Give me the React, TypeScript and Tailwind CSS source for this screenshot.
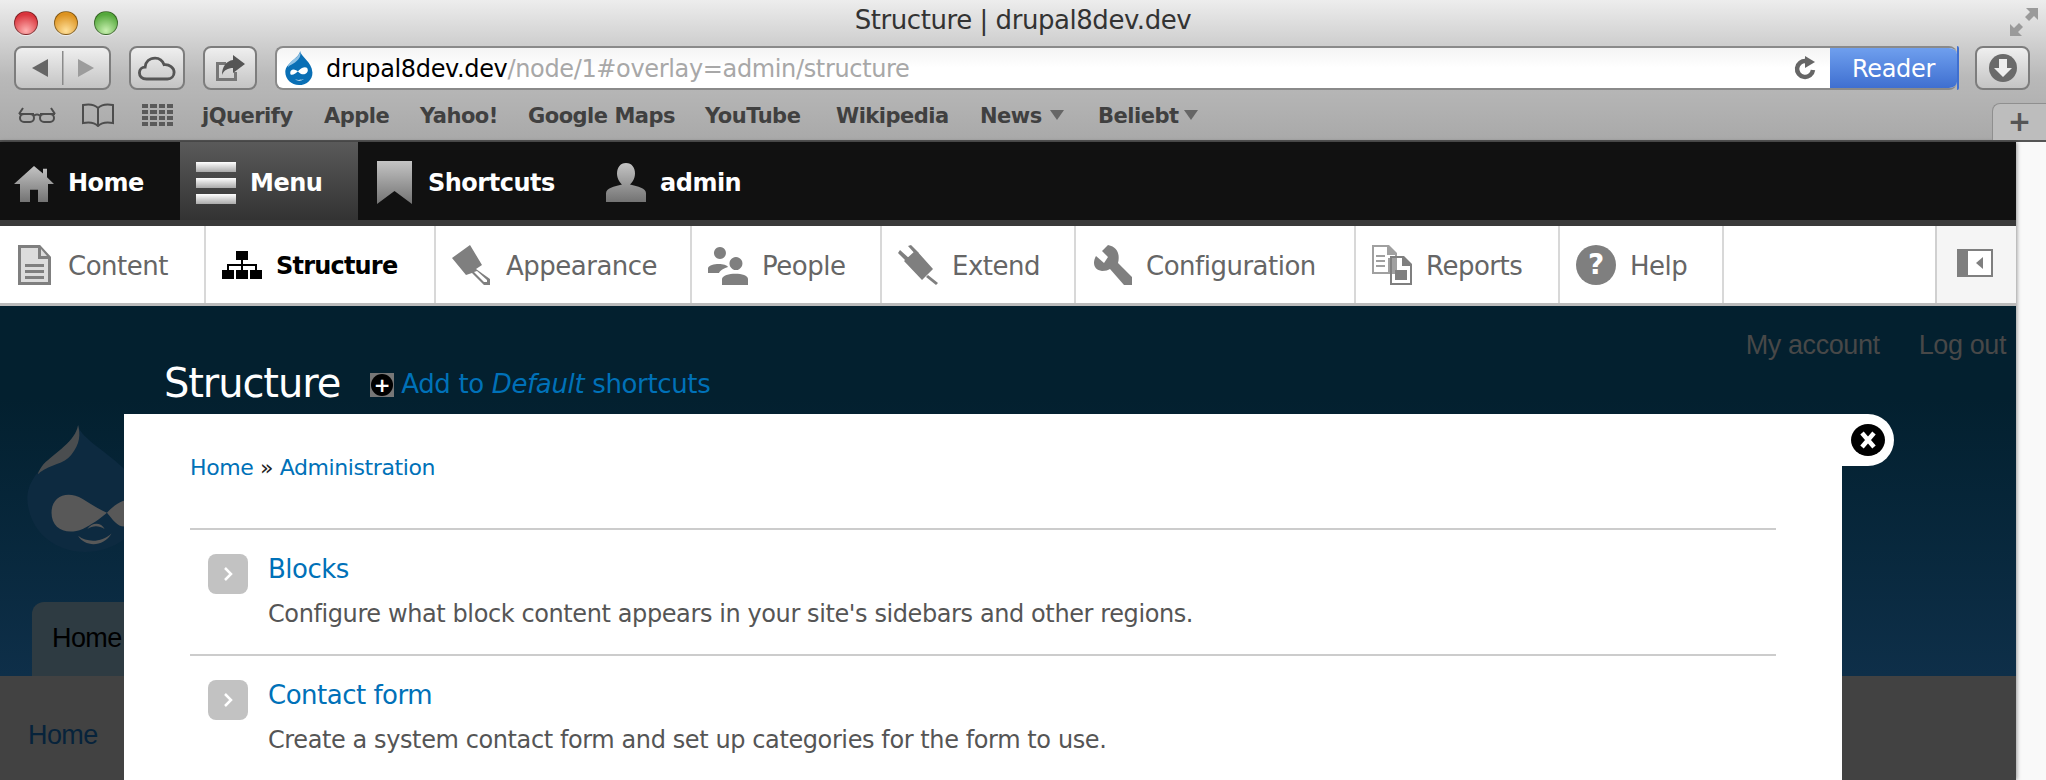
import type { ReactNode } from "react";

const lucida = "font-['DejaVu_Sans',sans-serif]";
const helvetica = "font-['Liberation_Sans',sans-serif]";

function Favicon() {
  return (
    <svg viewBox="0 0 100 124" className="w-[28px] h-[34px] shrink-0">
      <path d="M54 0C55 20 97 38 99 78C100 106 76 124 50 124C22 124 0 104 0 76C2 42 50 28 54 0Z" fill="#0a6fb5" />
      <path d="M54 2C54 14 40 24 26 34C18 40 10 50 9 60C18 48 40 46 52 24C56 16 56 8 54 2Z" fill="#8fc1e4" />
      <path d="M18 80C18 66 34 62 50 78C64 92 84 82 82 68C80 54 62 58 50 70C38 84 18 94 18 80Z" fill="#fff" />
      <path d="M36 104C44 110 60 110 68 102C60 106 44 106 36 104Z" fill="#fff" />
    </svg>
  );
}

function BackdropDrop() {
  return (
    <svg viewBox="0 0 100 110" className="w-[116px] h-[127px]">
      <path d="M44 0C46 16 96 34 100 66C100 92 78 110 50 110C22 110 0 90 0 62C2 34 40 22 44 0Z" fill="#0d2a40" />
      <path d="M44 0C42 14 24 24 14 34C8 42 9 44 11 41C20 34 32 34 38 26C46 16 46 8 44 0Z" fill="#4a4d4f" />
      <path d="M21 76C21 62 34 56 48 64C58 70 64 74 69 76C62 82 56 86 48 90C34 96 21 90 21 76Z" fill="#585858" />
      <path d="M69 76C78 66 88 62 96 66C98 78 94 88 84 88C78 88 74 82 69 76Z" fill="#585858" />
      <path d="M44 96C52 102 64 102 73 94C66 106 50 106 44 96Z" fill="#585858" />
      <path d="M52 90C56 84 64 84 67 90C62 87 57 87 52 90Z" fill="#585858" />
    </svg>
  );
}

function Light({ from, to }: { from: string; to: string }) {
  return (
    <div
      className="w-6 h-6 rounded-full border border-black/40 shadow-[0_1px_0_rgba(255,255,255,0.6)]"
      style={{ background: `radial-gradient(circle at 50% 85%, ${to} 0%, ${from} 75%)` }}
    />
  );
}

function TitleBar() {
  return (
    <div className="relative h-[46px] flex items-center pl-[14px] gap-4">
      <Light from="#d9343c" to="#ffb0b0" />
      <Light from="#dd9320" to="#ffe09a" />
      <Light from="#55a83c" to="#c8f0b0" />
      <div className={`absolute left-0 right-0 top-[5px] text-center text-[26px] leading-[30px] text-[#333] ${lucida} tracking-[-0.45px]`}>
        Structure | drupal8dev.dev
      </div>
      <svg viewBox="0 0 28 28" className="absolute right-[8px] top-[8px] w-[28px] h-[28px]" fill="#9a9a9a">
        <path d="M16 0H28V12L24 8L19 13L15 9L20 4ZM0 28V16L4 20L9 15L13 19L8 24L12 28Z" />
      </svg>
    </div>
  );
}

function ToolButton({ className, children }: { className: string; children: ReactNode }) {
  return (
    <div className={`h-[44px] rounded-[8px] border-2 border-[#7d7d7d] bg-gradient-to-b from-[#efefef] to-[#c4c4c4] flex items-center justify-center ${className}`}>
      {children}
    </div>
  );
}

function Toolbar() {
  return (
    <div className="h-[44px] flex items-center pl-[14px]">
      <ToolButton className="w-[97px]">
        <svg viewBox="0 0 93 40" className="w-[93px] h-[40px]">
          <path d="M32 11V29L16 20Z" fill="#666" />
          <rect x="46" y="3" width="1.5" height="34" fill="#8a8a8a" />
          <path d="M62 11V29L78 20Z" fill="#9c9c9c" />
        </svg>
      </ToolButton>
      <ToolButton className="w-[56px] ml-[18px]">
        <svg viewBox="0 0 40 26" className="w-[38px] h-[25px]" fill="none" stroke="#555" strokeWidth="3">
          <path d="M9 24C4 24 1.500 21 1.500 17.500C1.500 14 4 11.500 7.500 11.500C8 6 12 2 18 2C23 2 26 5 27.500 9C33 8.500 38 12 38 17C38 21 35 24 31 24Z" />
        </svg>
      </ToolButton>
      <ToolButton className="w-[54px] ml-[18px]">
        <svg viewBox="0 0 32 28" className="w-[32px] h-[28px]">
          <path d="M2 8H12V11H5V24H20V18H23V27H2Z" fill="#777" />
          <path d="M19 1L31 10L19 19V14C14 14 10 16 8 21C8 13 12 7 19 6Z" fill="#555" />
        </svg>
      </ToolButton>
      <div className="ml-[18px] w-[1682px] h-[44px] flex rounded-[8px] border-y-2 border-l-2 border-[#8a8a8a] bg-gradient-to-b from-[#f4f4f4] via-white to-white overflow-hidden">
        <div className="flex-1 flex items-center pl-2">
          <Favicon />
          <div className={`ml-[13px] mt-[2px] text-[24px] leading-[30px] tracking-[-0.35px] text-black ${lucida}`}>
            drupal8dev.dev<span className="text-[#a8a8a8]">/node/1#overlay=admin/structure</span>
          </div>
          <svg viewBox="0 0 24 24" className="ml-auto mr-[12px] w-[24px] h-[24px]" fill="none">
            <path d="M19 14A8 8 0 1 1 12 5" stroke="#666" strokeWidth="4.500" />
            <path d="M11 0L21 6L11 12Z" fill="#666" />
          </svg>
        </div>
        <div className={`w-[127px] pt-[2px] flex items-center justify-center text-[24px] text-white tracking-[-0.3px] bg-gradient-to-b from-[#6f9fee] to-[#3f6fd0] ${lucida}`}>
          Reader
        </div>
      </div>
      <div className="w-[2px] h-[44px] bg-[#3f6fd0] rounded-r-[6px]" />
      <ToolButton className="w-[55px] ml-[16px]">
        <svg viewBox="0 0 30 30" className="w-[30px] h-[30px]">
          <circle cx="15" cy="15" r="14" fill="#6a6a6a" />
          <path d="M11 6H19V15H24L15 24L6 15H11Z" fill="#ededed" />
        </svg>
      </ToolButton>
    </div>
  );
}

function Bookmark({ label, className }: { label: string; className: string }) {
  return <span className={`mt-[3px] text-[21px] font-bold text-[#404040] tracking-[-0.5px] ${className}`}>{label}</span>;
}

function Bookmarks() {
  return (
    <div className={`relative h-[50px] flex items-center pl-[18px] ${lucida}`}>
      <svg viewBox="0 0 38 16" className="w-[38px] h-[16px]" fill="none" stroke="#4d4d4d" strokeWidth="2">
        <path d="M1 7L5 1M37 7L33 1M1 7H16M22 7H37M16 9C17 7 21 7 22 9" />
        <rect x="2" y="7" width="14" height="8" rx="4" />
        <rect x="22" y="7" width="14" height="8" rx="4" />
      </svg>
      <svg viewBox="0 0 34 24" className="ml-[25px] w-[34px] h-[24px]" fill="none" stroke="#4d4d4d" strokeWidth="2">
        <path d="M17 5C13 1 7 1 2 2V20C7 19 13 19 17 23C21 19 27 19 32 20V2C27 1 21 1 17 5ZM17 5V23" />
      </svg>
      <div className="ml-[27px] w-[31px] grid grid-cols-4 gap-[2px]">
        {Array.from({ length: 16 }).map((_, i) => (
          <div key={i} className="h-[4px] bg-[#5a5a5a]" />
        ))}
      </div>
      <Bookmark label="jQuerify" className="ml-[29px] w-[122px]" />
      <Bookmark label="Apple" className="w-[96px]" />
      <Bookmark label="Yahoo!" className="w-[108px]" />
      <Bookmark label="Google Maps" className="w-[177px]" />
      <Bookmark label="YouTube" className="w-[131px]" />
      <Bookmark label="Wikipedia" className="w-[144px]" />
      <Bookmark label="News" className="w-[70px]" />
      <span className="w-0 h-0 border-x-[7px] border-x-transparent border-t-[10px] border-t-[#666] mr-[34px]" />
      <Bookmark label="Beliebt" className="w-[86px]" />
      <span className="w-0 h-0 border-x-[7px] border-x-transparent border-t-[10px] border-t-[#666]" />
      <div className="absolute right-0 bottom-0 w-[54px] h-[37px] rounded-tl-[8px] border-l border-t border-[#8f8f8f] bg-[#bdbdbd] flex items-center justify-center text-[#555] text-[28px] font-bold leading-none">
        +
      </div>
    </div>
  );
}

function GreyIcon({ id, children, className }: { id: string; children: ReactNode; className: string }) {
  return (
    <svg viewBox="0 0 40 40" className={className} preserveAspectRatio="none">
      <defs>
        <linearGradient id={id} x1="0" y1="0" x2="0" y2="1">
          <stop offset="0" stopColor="#c4c4c4" />
          <stop offset="1" stopColor="#737373" />
        </linearGradient>
      </defs>
      <g fill={`url(#${id})`}>{children}</g>
    </svg>
  );
}

function BlackBar() {
  return (
    <div className={`h-[84px] bg-[#111] border-b-[6px] border-[#3a3a3a] flex text-[24px] font-bold text-white ${lucida} tracking-[-0.5px]`}>
      <div className="w-[180px] pt-[3px] flex items-center pl-[14px] gap-[14px]">
        <GreyIcon id="g-home" className="w-[40px] h-[38px]">
          <path d="M20 2L29 10V5H33V14L40 21H34V40H24V27H16V40H6V21H0Z" />
        </GreyIcon>
        Home
      </div>
      <div className="w-[178px] pt-[3px] flex items-center pl-[16px] gap-[14px] bg-gradient-to-b from-[#5a5a5a] to-[#333]">
        <div className="w-[40px] flex flex-col gap-[6px]">
          <div className="h-[10px] bg-gradient-to-b from-white to-[#aaa]" />
          <div className="h-[10px] bg-gradient-to-b from-white to-[#aaa]" />
          <div className="h-[10px] bg-gradient-to-b from-white to-[#aaa]" />
        </div>
        Menu
      </div>
      <div className="w-[220px] pt-[3px] flex items-center pl-[19px] gap-[16px]">
        <GreyIcon id="g-mark" className="w-[35px] h-[43px]">
          <path d="M0 0H40V40L20 28L0 40Z" />
        </GreyIcon>
        Shortcuts
      </div>
      <div className="pt-[3px] flex items-center pl-[28px] gap-[14px]">
        <GreyIcon id="g-user" className="w-[40px] h-[39px]">
          <path d="M20 0C26 0 29 5 29 11C29 17 25 21 24 22C32 24 40 26 40 31V40H0V31C0 26 8 24 16 22C15 21 11 17 11 11C11 5 14 0 20 0Z" />
        </GreyIcon>
        admin
      </div>
    </div>
  );
}

const g = "#7f7f7f";

const icons: Record<string, ReactNode> = {
  Content: (
    <>
      <path d="M0 0H22L33 12V40H0Z" fill="#dcdcdc" />
      <path d="M0 0H22L33 12V40H0ZM3 3V37H30V14H20V3ZM23 4V11H29Z" fillRule="evenodd" fill={g} />
      <path d="M7 19H26V22H7ZM7 25H26V28H7ZM7 31H26V34H7Z" fill={g} />
    </>
  ),
  Structure: (
    <path d="M14 6H26V15H21V19H35V25H40V34H28V25H33V21H21V25H26V34H14V25H19V21H7V25H12V34H0V25H5V19H19V15H14Z" fill="#000" />
  ),
  Appearance: (
    <path d="M0 13L18 0L30 20L24 24L38 34V40H32L20 28L14 30ZM22 27L32 37H35V35L25 26Z" fillRule="evenodd" fill={g} />
  ),
  People: (
    <path d="M12 2A6 6 0 1 1 11.900 2ZM28 12A6.500 6.500 0 1 1 27.900 12ZM0 23C2 18 18 18 20 22C14 24 12 26 11 28H0ZM14 34C15 27 40 27 40 34V40H14Z" fill={g} />
  ),
  Extend: (
    <path d="M6 16L18 5L35 24L24 35ZM0 8L2 5L12 14L9 17ZM10 1L13 0L21 8L18 10ZM30 30L40 38L38 40L28 32Z" fill={g} />
  ),
  Configuration: <path d="M16 0L10 6L16 12L12 18L4 11C0 18 2 25 10 26C14 26 16 25 18 24L32 40H40V32L26 18C28 10 26 2 16 0Z" fill={g} />,
  Reports: (
    <>
      <path d="M0 0H17L25 8V29H0ZM2 2V27H16V13H23V10H15V2Z" fillRule="evenodd" fill="#a0a0a0" />
      <path d="M4 10H13V12H4ZM4 15H13V17H4ZM4 20H13V22H4Z" fill="#a0a0a0" />
      <path d="M18 11H32L40 19V40H18ZM20 13V38H38V21H30V13Z" fillRule="evenodd" fill={g} />
      <path d="M23 25H35V35H23Z" fill={g} />
    </>
  ),
};

function NavItem({ label, active, className }: { label: string; active?: boolean; className: string }) {
  return (
    <div className={`h-full flex items-center border-r-2 border-[#d8d8d8] ${className}`}>
      {label === "Help" ? (
        <div className="w-[40px] h-[40px] rounded-full bg-[#7f7f7f] flex items-center justify-center text-white text-[28px] font-bold leading-none">
          ?
        </div>
      ) : (
        <svg viewBox="0 0 40 40" className="w-[40px] h-[40px] shrink-0">
          {icons[label]}
        </svg>
      )}
      <span className={active ? "mt-[3px] text-[24px] font-bold text-black tracking-[-0.8px]" : "mt-[3px] text-[#666] tracking-[-0.5px]"}>{label}</span>
    </div>
  );
}

function NavBar() {
  return (
    <div className={`h-[80px] bg-white border-b-[3px] border-[#bbb] flex text-[26px] ${lucida}`}>
      <NavItem label="Content" className="w-[206px] pl-[18px] gap-[10px]" />
      <NavItem label="Structure" active className="w-[230px] pl-[16px] gap-[14px]" />
      <NavItem label="Appearance" className="w-[256px] pl-[16px] gap-[14px]" />
      <NavItem label="People" className="w-[190px] pl-[16px] gap-[14px]" />
      <NavItem label="Extend" className="w-[194px] pl-[16px] gap-[14px]" />
      <NavItem label="Configuration" className="w-[280px] pl-[16px] gap-[14px]" />
      <NavItem label="Reports" className="w-[204px] pl-[16px] gap-[14px]" />
      <NavItem label="Help" className="w-[164px] pl-[16px] gap-[14px]" />
      <div className="ml-auto w-[81px] h-full bg-[#f5f5f5] border-l-2 border-[#d0d0d0] pr-[3px] flex items-center justify-center">
        <div className="w-[36px] h-[28px] mb-1 border-2 border-[#7f7f7f] bg-white flex">
          <div className="w-[9px] bg-[#7f7f7f]" />
          <div className="flex-1 flex items-center justify-center">
            <span className="w-0 h-0 border-y-[6px] border-y-transparent border-r-[7px] border-r-[#7f7f7f]" />
          </div>
        </div>
      </div>
    </div>
  );
}

function Backdrop() {
  return (
    <>
      <div className="h-[370px] bg-gradient-to-b from-[#03202f] from-[25%] to-[#0e2f49] flex flex-col">
        <div className={`h-[62px] pt-[16px] flex items-center justify-end pr-[10px] gap-[39px] ${helvetica} text-[27px] text-[#484848] tracking-[-0.4px]`}>
          <span>My account</span>
          <span>Log out</span>
        </div>
        <div className={`h-[30px] flex items-center pl-[164px] ${lucida}`}>
          <span className="text-[40px] text-white tracking-[-1.1px]">Structure</span>
          <div className="ml-[30px] mt-[3px] w-[24px] h-[24px] bg-[#777] flex items-center justify-center">
            <div className="w-[22px] h-[22px] rounded-full bg-black flex items-center justify-center text-white text-[20px] font-bold leading-none">
              +
            </div>
          </div>
          <span className="ml-[7px] mt-[3px] text-[26px] text-[#0071b8] tracking-[-0.35px]">
            Add to <em>Default</em> shortcuts
          </span>
        </div>
        <div className="pl-[27px] mt-[27px]">
          <BackdropDrop />
        </div>
        <div className={`mt-[50px] ml-[32px] w-[120px] h-[74px] rounded-t-[12px] bg-[#2e3b42] pl-[20px] pt-[16px] ${helvetica} text-[27px] text-black tracking-[-0.6px]`}>
          Home
        </div>
      </div>
      <div className={`flex-1 bg-[#424242] pl-[28px] pt-[39px] ${helvetica} text-[27px] text-[#07233b] tracking-[-0.6px]`}>
        Home
      </div>
    </>
  );
}

function AdminRow({ title, description }: { title: string; description: string }) {
  return (
    <div className="h-[126px] border-t-2 border-[#ccc] pt-[23px] pl-[18px] flex gap-[20px]">
      <div className="w-[40px] h-[40px] mt-[1px] rounded-[8px] bg-[#c2c2c2] flex items-center justify-center shrink-0">
        <svg viewBox="0 0 10 14" className="w-[10px] h-[14px]" fill="none" stroke="#fff" strokeWidth="2.500">
          <path d="M2 1L8 7L2 13" />
        </svg>
      </div>
      <div>
        <div className="text-[26px] leading-[32px] text-[#0071b8] tracking-[-0.5px]">{title}</div>
        <div className="mt-[15px] text-[24px] leading-[28px] text-[#555] tracking-[-0.4px]">{description}</div>
      </div>
    </div>
  );
}

function Overlay() {
  return (
    <div className={`absolute left-[124px] top-[414px] w-[1718px] h-[366px] bg-white pl-[66px] pr-[66px] pt-[39px] ${lucida}`}>
      <div className="h-[75px] text-[22px] leading-[30px] text-[#222] tracking-[-0.4px]">
        <span className="text-[#0071b8]">Home</span> » <span className="text-[#0071b8]">Administration</span>
      </div>
      <AdminRow title="Blocks" description="Configure what block content appears in your site's sidebars and other regions." />
      <AdminRow title="Contact form" description="Create a system contact form and set up categories for the form to use." />
      <div className="absolute left-full top-0 w-[52px] h-[52px] rounded-r-[26px] bg-white flex items-center justify-center">
        <svg viewBox="0 0 34 32" className="w-[34px] h-[32px]">
          <ellipse cx="17" cy="16" rx="17" ry="16" fill="#000" />
          <path d="M11 9L23 23M23 9L11 23" stroke="#fff" strokeWidth="4.500" />
        </svg>
      </div>
    </div>
  );
}

export default function App() {
  return (
    <div className="relative w-[2046px] h-[780px] overflow-hidden flex flex-col bg-[#f9f9f9]">
      <div className="h-[142px] border-b-2 border-[#555] bg-gradient-to-b from-[#ededed] via-[#b9b9b9] via-[55%] to-[#a9a9a9]">
        <TitleBar />
        <Toolbar />
        <Bookmarks />
      </div>
      <div className="flex-1 w-[2016px] flex flex-col shadow-[1px_0_4px_rgba(0,0,0,0.4)]">
        <BlackBar />
        <NavBar />
        <Backdrop />
      </div>
      <Overlay />
    </div>
  );
}
